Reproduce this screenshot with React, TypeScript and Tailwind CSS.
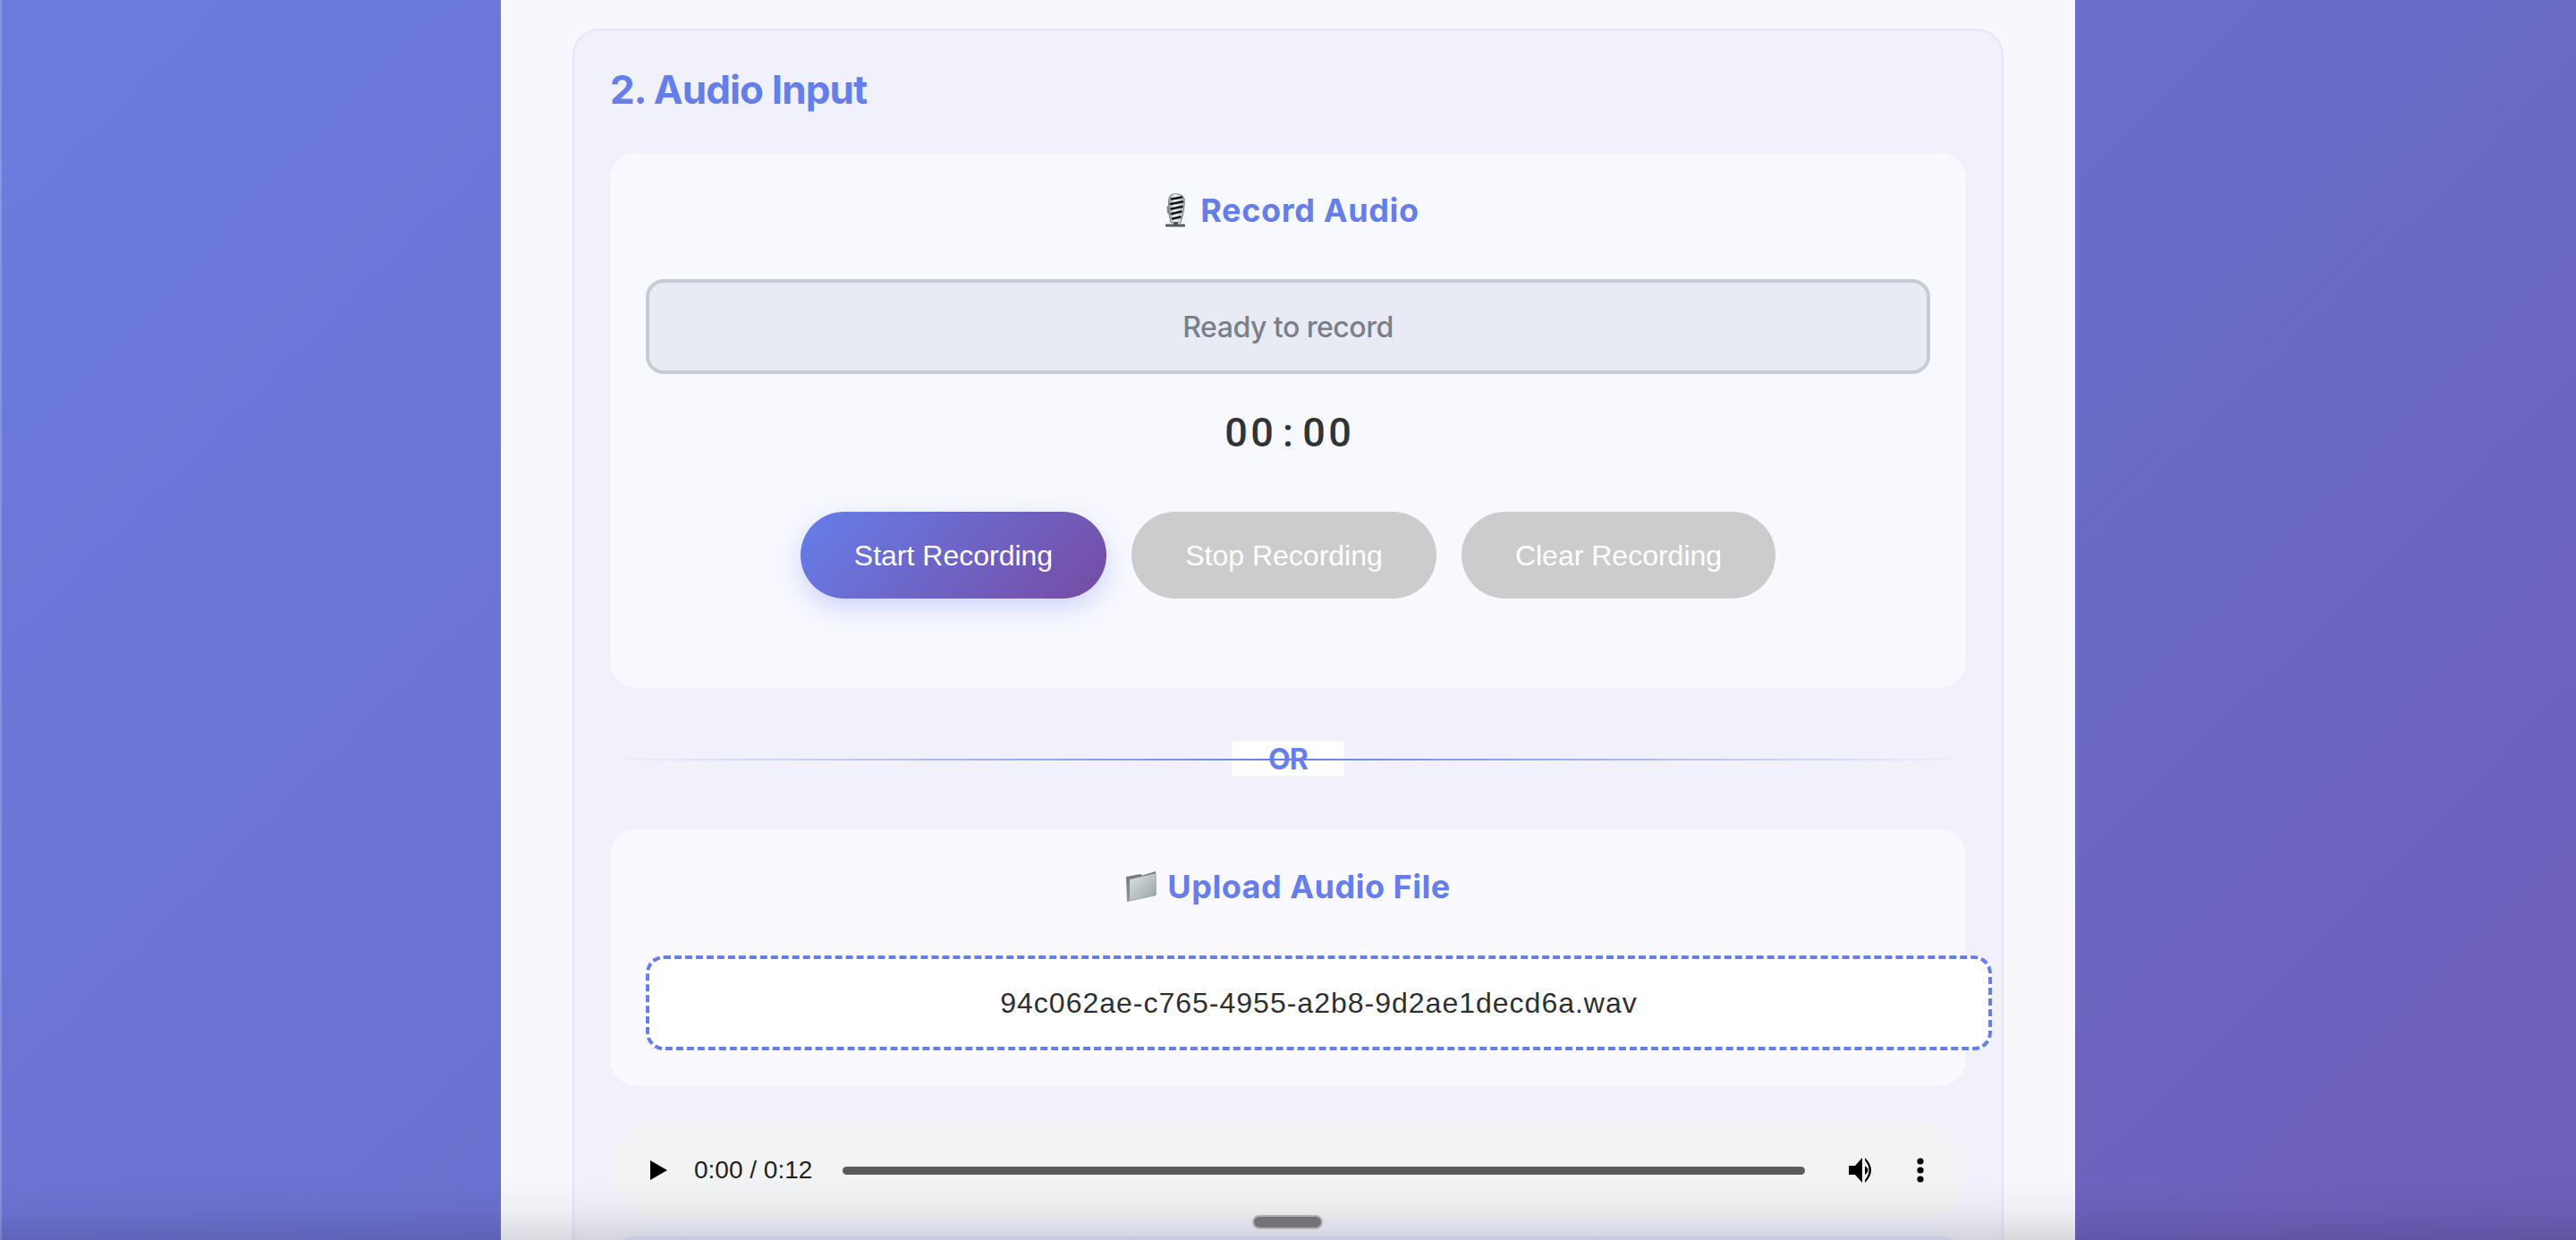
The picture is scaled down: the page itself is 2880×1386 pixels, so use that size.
const sans = "font-['Liberation_Sans',Arial,sans-serif]";
const inter = "font-['Inter',sans-serif]";

function MicIcon() {
  return (
    <svg width="24" height="38" viewBox="0 0 24 38" className="mr-[16px] shrink-0">
      <defs>
        <linearGradient id="micBody" x1="0" y1="0" x2="1" y2="0">
          <stop offset="0" stopColor="#8b9296" />
          <stop offset="0.4" stopColor="#f4f8fb" />
          <stop offset="1" stopColor="#a3adb3" />
        </linearGradient>
      </defs>
      <path d="M7 33 L18 33 C21 24 23 12 22 6 C20.5 0 9 -1 6 3 C3.5 7 4 22 7 33Z" fill="url(#micBody)" stroke="#6a7074" strokeWidth="0.8" />
      <path d="M4.5 14 L2.5 15 L3 22 L6 25 Z" fill="#7d8488" />
      <g stroke="#111315" strokeWidth="2.6" strokeLinecap="round" fill="none">
        <path d="M8 6.5 L19 4.5" />
        <path d="M7 12 L20 9.5" />
        <path d="M7.5 17.5 L19.5 15" />
        <path d="M8 23 L18.5 20.5" />
        <path d="M9 28.5 L17.5 26.5" />
      </g>
      <rect x="10" y="32" width="5" height="3" fill="#4a4e50" />
      <rect x="1" y="34.5" width="22" height="3" rx="1" fill="#55595c" />
    </svg>
  );
}

function FolderIcon() {
  return (
    <svg width="36" height="36" viewBox="0 0 36 36" className="mr-[11px] shrink-0">
      <defs>
        <linearGradient id="folderBack" x1="0" y1="0" x2="0" y2="1">
          <stop offset="0" stopColor="#6d767c" />
          <stop offset="1" stopColor="#8e979c" />
        </linearGradient>
        <linearGradient id="folderFront" x1="0" y1="0" x2="1" y2="1">
          <stop offset="0" stopColor="#dde2e4" />
          <stop offset="1" stopColor="#98a2a7" />
        </linearGradient>
      </defs>
      <path d="M1 7 L17 4 L19 5.5 L34 1 L34 28 L2 35 Z" fill="url(#folderBack)" />
      <path d="M5 10 L35 3 L35 27 L5 34 Z" fill="url(#folderFront)" />
    </svg>
  );
}

function App() {
  return (
    <div className="relative h-[1386px] w-full overflow-hidden bg-[linear-gradient(135deg,#6c7cde_0%,#6a6bc8_65%,#6f5eb8_100%)]">
      <div className="absolute inset-y-0 left-0 w-[2px] bg-white/20" />
      <div className="mx-auto h-full w-[1760px] bg-white/95 px-[80px] pt-[32px]">
        <section className="rounded-[30px] border-2 border-[#e2e6f9] bg-[#f0f1fb] px-[40px] pt-[39px]">
          <h2 className={`${inter} text-[44px] font-bold leading-[54px] tracking-[-0.9px] text-[#667eea]`}>2. Audio Input</h2>
          <div className="mt-[44px] flex h-[598px] flex-col rounded-[30px] bg-[#f8f9ff] px-[40px] pt-[40px]">
            <h3 className={`${inter} flex h-[48px] items-center justify-center pl-[9px] text-[36px] font-bold tracking-[0.65px] text-[#667eea]`}>
              <MicIcon />
              Record Audio
            </h3>
            <div className={`${inter} mt-[53px] flex h-[106px] items-center justify-center rounded-[20px] border-4 border-[#c8cad4] bg-[#e8ebf3] pt-[2px] text-[32px] font-medium tracking-[-0.5px] text-[#7a808a]`}>
              Ready to record
            </div>
            <div className="mt-[42px] flex h-[48px] justify-center font-['Roboto',sans-serif] text-[45px] font-medium leading-[48px] text-[#333333]">
              <span className="w-[29px] text-center">0</span>
              <span className="w-[29px] text-center">0</span>
              <span className="w-[29px] text-center">:</span>
              <span className="w-[29px] text-center">0</span>
              <span className="w-[29px] text-center">0</span>
            </div>
            <div className={`${sans} mt-[64px] flex justify-center gap-[28px] text-[32px] text-white`}>
              <button className="h-[97px] w-[342px] rounded-[50px] bg-[linear-gradient(135deg,#667eea,#764ba2)] shadow-[0_10px_30px_rgba(102,126,234,0.3)]">Start Recording</button>
              <button className="h-[97px] w-[341px] rounded-[50px] bg-[#cccccc]">Stop Recording</button>
              <button className="h-[97px] w-[351px] rounded-[50px] bg-[#cccccc]">Clear Recording</button>
            </div>
          </div>
          <div className="relative mt-[60px] flex h-[38px] justify-center">
            <span className={`${inter} flex w-[126px] items-center justify-center bg-white pt-[2px] text-[32px] font-bold leading-[38px] tracking-[-0.8px] text-[#667eea]`}>OR</span>
            <div className="absolute inset-x-0 top-[19px] h-[2px] bg-[linear-gradient(90deg,transparent,#667eea,transparent)]" />
          </div>
          <div className="mt-[60px] h-[287px] rounded-[30px] bg-[#f9f9ff] px-[40px] pt-[40px]">
            <h3 className={`${inter} flex h-[48px] items-center justify-center text-[36px] font-bold tracking-[0.5px] text-[#667eea]`}>
              <FolderIcon />
              Upload Audio File
            </h3>
            <div className={`${sans} mt-[53px] flex h-[106px] w-[1505px] items-center justify-center rounded-[20px] border-4 border-dashed border-[#667eea] bg-white text-[32px] tracking-[1px] text-[#2f2f2f]`}>
              94c062ae-c765-4955-a2b8-9d2ae1decd6a.wav
            </div>
          </div>
          <div className={`${sans} mt-[40px] flex h-[108px] items-center rounded-[54px] bg-[#f1f3f4] pl-[45px] pr-[48px] text-[28px] text-[#1f1f1f]`}>
            <svg width="19" height="22" viewBox="0 0 19 22" className="shrink-0"><path d="M0 0 L19 11 L0 22 Z" fill="#000" /></svg>
            <span className="ml-[30px] w-[133px] shrink-0 whitespace-nowrap">0:00 / 0:12</span>
            <div className="ml-[33px] h-[9px] w-[1076px] shrink-0 rounded-full bg-[#5b5b5b]" />
            <svg width="32" height="28" viewBox="0 0 32 28" className="ml-[49px] shrink-0">
              <path d="M0 9 H7 L15 0 V28 L7 19 H0 Z" fill="#000" />
              <path d="M18 9 Q25 14 18 19 Z" fill="#000" />
              <path d="M18 0 Q32 14 18 28 L18 25 Q27 14 18 3 Z" fill="#000" />
            </svg>
            <svg width="8" height="28" viewBox="0 0 8 28" className="ml-[44px] shrink-0">
              <circle cx="4" cy="4" r="3.6" fill="#000" />
              <circle cx="4" cy="14" r="3.6" fill="#000" />
              <circle cx="4" cy="24" r="3.6" fill="#000" />
            </svg>
          </div>
          <div className="mx-[6px] mt-[20px] h-[40px] rounded-t-[20px] bg-[#e4e5fa]" />
        </section>
      </div>
      <div className="absolute inset-x-0 bottom-0 h-[70px] bg-[linear-gradient(180deg,transparent,rgba(0,0,0,0.03)_50%,rgba(0,0,0,0.12))]" />
      <div className="absolute bottom-[12px] left-[1400px] h-[16px] w-[79px] rounded-full border-2 border-[#b4b4b8] bg-[#747478]" />
    </div>
  );
}

export default App;
